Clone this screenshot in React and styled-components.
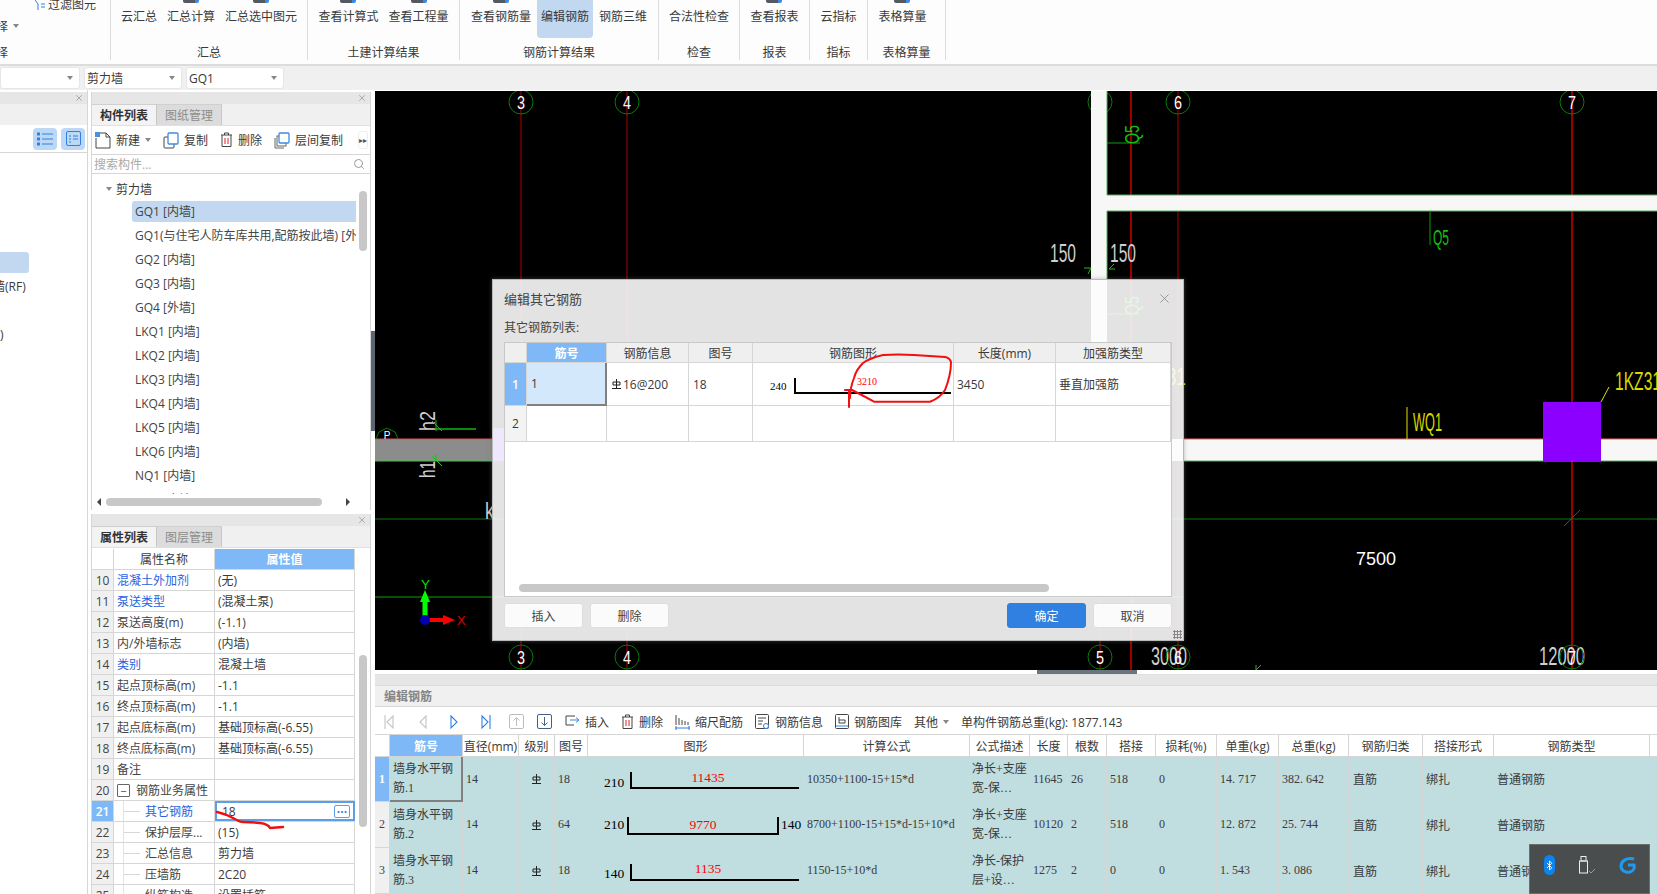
import React from 'react';
import styled, { createGlobalStyle } from 'styled-components';
import { X, Search, Bluetooth } from 'lucide-react';

const sans = '"Open Sans", "Noto Sans CJK SC", sans-serif';
const serif = '"Liberation Serif", "Noto Sans CJK SC", serif';
const line = '#d6d6d6';
const blue = '#7eb8f7';

const Global = createGlobalStyle`
    * { box-sizing: border-box; }
    html, body { margin: 0; padding: 0; background: white; }
`;

const Page = styled.div`
    position: relative;
    width: 1657px;
    height: 894px;
    overflow: hidden;
    font-family: ${sans};
    font-size: 12px;
    color: #3a3a3a;
    background: white;
`;

/* ribbon */
const Ribbon = styled.div`
    display: flex;
    height: 66px;
    background: #fdfdfd;
    border-bottom: 2px solid #dcdcdc;
`;

const Group = styled.div`
    width: ${p => p.$w}px;
    height: 60px;
    flex: none;
    border-right: 1px solid #dcdcdc;
`;

const ItemRow = styled.div`
    display: flex;
    justify-content: center;
    gap: 10px;
    height: 45px;
    padding-right: ${p => p.$shift || 0}px;
`;

const Item = styled.div`
    display: flex;
    flex-direction: column;
    align-items: center;
    height: 38px;
    line-height: 18px;
    white-space: nowrap;
    ${p => p.$on && `
        margin: 0 -4px;
        padding: 0 4px;
        background: #c1d8f0;
        border-radius: 0 0 4px 4px;
    `}
`;

const Stub = styled.span`
    display: block;
    width: ${p => (p.$show ? 16 : 0)}px;
    height: 3px;
    margin-bottom: 5px;
    background: #55585e;
    border-radius: 0 0 2px 2px;
    border-right: ${p => (p.$show ? '4px solid #3d8be0' : 'none')};
`;

const GroupLabel = styled.div`
    text-align: center;
    line-height: 15px;
`;

const ClipGroup = styled(Group)`
    overflow: hidden;
    position: relative;
`;

const FilterRow = styled.div`
    display: flex;
    align-items: center;
    gap: 3px;
    height: 10px;
    padding-left: 35px;
    line-height: 10px;
`;

const PickRow = styled.div`
    display: flex;
    align-items: center;
    gap: 5px;
    height: 35px;
    margin-left: -4px;
    padding-bottom: 3px;
`;

const ClipLabel = styled(GroupLabel)`
    text-align: left;
    margin-left: -4px;
`;

const Caret = styled.i`
    display: block;
    width: 0;
    height: 0;
    flex: none;
    border-left: 3px solid transparent;
    border-right: 3px solid transparent;
    border-top: 4px solid #888;
`;

/* selects */
const SelectBar = styled.div`
    display: flex;
    gap: 4px;
    height: 24px;
    padding-top: 1px;
    background: #f0f0f0;
`;

const Select = styled.div`
    display: flex;
    align-items: center;
    justify-content: space-between;
    width: ${p => p.$w}px;
    height: 22px;
    padding: 0 6px 0 2px;
    background: white;
    border: 1px solid #e6e6e6;
    border-radius: 3px;
`;

/* workspace */
const Workspace = styled.div`
    display: flex;
    height: 804px;
`;

const NavColumn = styled.div`
    width: 88px;
    flex: none;
    padding-top: 2px;
    border-right: 1px solid ${line};
`;

const PaneHead = styled.div`
    display: flex;
    align-items: center;
    justify-content: flex-end;
    height: 12px;
    padding-right: 3px;
    background: #e6e6e6;
    color: #a0a0a0;
`;

const NavTabs = styled.div`
    height: 21px;
    background: #f0f0f0;
`;

const NavTools = styled.div`
    display: flex;
    justify-content: flex-end;
    align-items: center;
    gap: 4px;
    height: 28px;
    padding-right: 2px;
    border-bottom: 1px solid ${line};
`;

const ViewBtn = styled.div`
    display: flex;
    align-items: center;
    justify-content: center;
    width: 24px;
    height: 22px;
    background: #bcd8f5;
    border-radius: 4px;
`;

const NavList = styled.div`
    padding-top: 99px;
`;

const NavRow = styled.div`
    height: 24px;
    line-height: 21px;
    white-space: nowrap;
    overflow: hidden;
    text-indent: ${p => p.$indent || 0}px;
    ${p => p.$on && `
        width: 29px;
        height: 21px;
        margin-bottom: 3px;
        background: #c1d8f0;
        border-radius: 0 3px 3px 0;
    `}
`;

const PaneColumn = styled.div`
    width: 287px;
    flex: none;
    padding: 2px 4px 0 3px;
    position: relative;
`;

const Pane = styled.div`
    height: ${p => p.$h}px;
    margin-bottom: 4px;
    border-left: 1px solid ${line};
    border-right: 1px solid ${line};
    overflow: hidden;
    position: relative;
`;

const Tabs = styled.div`
    display: flex;
    height: 22px;
    background: #f0f0f0;
    border-bottom: 1px solid #e0e0e0;
`;

const Tab = styled.div`
    width: 65px;
    line-height: 21px;
    text-align: center;
    font-weight: ${p => (p.$on ? 600 : 400)};
    color: ${p => (p.$on ? '#333' : '#8c8c8c')};
    background: ${p => (p.$on ? '#f3f3f3' : '#dcdcdc')};
    border-right: 1px solid #c8c8c8;
    border-top: 1px solid #d0d0d0;
`;

const ToolBar = styled.div`
    display: flex;
    align-items: center;
    gap: 12px;
    height: 29px;
    padding-left: 3px;
    border-bottom: 1px solid ${line};
    white-space: nowrap;
`;

const Tool = styled.div`
    display: flex;
    align-items: center;
    gap: 5px;
    flex: none;
`;

const MoreBtn = styled.div`
    width: 10px;
    height: 18px;
    margin-left: auto;
    margin-right: 2px;
    line-height: 16px;
    font-size: 8px;
    text-align: center;
    color: #555;
    border: 1px solid #eee;
    border-radius: 3px;
`;

const SearchRow = styled.div`
    display: flex;
    align-items: center;
    justify-content: space-between;
    height: 19px;
    padding: 0 5px 0 2px;
    color: #aaa;
    border-bottom: 1px solid ${line};
`;

const Tree = styled.div`
    height: 320px;
    padding-top: 2px;
    overflow: hidden;
    position: relative;
`;

const TreeRoot = styled.div`
    display: flex;
    align-items: center;
    gap: 4px;
    height: 25px;
    padding-left: 14px;
`;

const TreeRow = styled.div`
    width: 224px;
    height: 21px;
    margin: 0 0 3px 40px;
    padding-left: 3px;
    line-height: 22px;
    white-space: nowrap;
    overflow: hidden;
    color: #444;
    background: ${p => (p.$on ? '#c1d8f0' : 'transparent')};
    border-radius: 3px 0 0 3px;
`;

const VThumb = styled.div`
    position: absolute;
    top: ${p => p.$top}px;
    right: 3px;
    width: 8px;
    height: ${p => p.$h}px;
    background: #c8c8c8;
    border-radius: 4px;
`;

const HScroll = styled.div`
    display: flex;
    align-items: center;
    justify-content: space-between;
    height: 16px;
    padding: 0 20px 0 5px;
`;

const HArrow = styled.i`
    display: block;
    width: 0;
    height: 0;
    border-top: 4px solid transparent;
    border-bottom: 4px solid transparent;
    border-${p => (p.$dir === 'left' ? 'right' : 'left')}: 4px solid #444;
`;

const HThumb = styled.div`
    width: 216px;
    height: 8px;
    margin: 0 auto 0 5px;
    background: #c8c8c8;
    border-radius: 4px;
`;

/* shared grid */
const GridRow = styled.div`
    display: grid;
    grid-template-columns: ${p => p.$cols};
    height: ${p => p.$h}px;
    background: ${p => p.$bg || 'white'};
    border-bottom: 1px solid ${line};
    flex: none;
`;

const Cell = styled.div`
    display: flex;
    align-items: center;
    justify-content: ${p => (p.$center ? 'center' : 'flex-start')};
    min-width: 0;
    padding: 0 ${p => (p.$center ? 0 : p.$pad ?? 4)}px;
    border-right: 1px solid ${line};
    background: ${p => p.$bg || 'transparent'};
    color: ${p => p.$color || 'inherit'};
    font-weight: ${p => (p.$bold ? 600 : 400)};
    white-space: nowrap;
    overflow: hidden;
    position: relative;
`;

const SelectedCell = styled(Cell)`
    border-right: 2px solid #808080;
    border-bottom: 2px solid #808080;
    margin-bottom: -1px;
    white-space: normal;
    line-height: 19px;
`;

/* property table */
const PropTable = styled.div`
    width: 263px;
    margin-top: 1px;
`;

const Branch = styled.span`
    display: block;
    position: absolute;
    left: 9px;
    top: 0;
    bottom: 0;
    width: 17px;
    border-left: 1px solid #e4e4e4;
    &::after {
        content: '';
        position: absolute;
        left: 0;
        right: 0;
        top: 10px;
        border-top: 1px solid #d8d8d8;
    }
`;

const FoldBox = styled.span`
    display: flex;
    align-items: center;
    justify-content: center;
    width: 13px;
    height: 13px;
    margin-right: 6px;
    border: 1px solid #666;
    border-radius: 1px;
    font-size: 11px;
    line-height: 1;
`;

const ActiveValue = styled(Cell)`
    justify-content: space-between;
    border: 2px solid #5b9fe8;
    padding: 0 3px 0 5px;
`;

const DotsBtn = styled.span`
    width: 16px;
    height: 13px;
    line-height: 6px;
    text-align: center;
    color: #3d7fd0;
    font-weight: 700;
    border: 1px solid #5b9fe8;
    border-radius: 2px;
`;

/* right side */
const RightColumn = styled.div`
    flex: 1;
    min-width: 0;
    padding-top: 1px;
    position: relative;
`;

const Canvas = styled.div`
    position: relative;
    height: 579px;
    background: black;
`;

const CadSvg = styled.svg`
    display: block;
    font-family: "Liberation Sans", sans-serif;
`;

const PaneGrip = styled.div`
    position: absolute;
    left: -4px;
    top: 241px;
    width: 4px;
    height: 100px;
    background: #5d6670;
`;

const BottomGrip = styled.div`
    height: 4px;
    background: white;
    display: flex;
    padding-left: 662px;
    &::before {
        content: '';
        width: 100px;
        background: #6c757d;
    }
`;

const EditHead = styled.div`
    height: 33px;
    border-top: 1px solid #e0e0e0;
    background: linear-gradient(#e6e6e6 0 10px, #dcdcdc 10px 11px, #f0f0f0 11px);
    display: flex;
    align-items: flex-end;
    padding: 0 0 1px 9px;
    color: #858585;
    border-bottom: 1px solid ${line};
    font-weight: 600;
`;

const EditTools = styled(ToolBar)`
    height: 28px;
    padding: 2px 0 0 9px;
    background: white;
`;

const Slot = styled.div`
    display: flex;
    align-items: center;
    width: ${p => p.$w}px;
    margin-right: -12px;
    flex: none;
`;

const BarTable = styled.div`
    font-family: ${serif};
    background: white;
`;

const HeadRow = styled(GridRow)`
    font-family: ${sans};
    height: 22px;
`;

const Wrapped = styled.div`
    white-space: normal;
    line-height: 19px;
`;

const EllipsisCell = styled(Cell)`
    font-family: ${serif};
`;

const SvgCell = styled.svg`
    display: block;
    font-family: "Liberation Serif", serif;
`;

const Tray = styled.div`
    position: absolute;
    right: 7px;
    bottom: 0;
    display: flex;
    align-items: center;
    justify-content: space-between;
    width: 121px;
    height: 50px;
    padding: 0 12px 8px 14px;
    background: #4a4d4d;
    border: 1px solid #6b6e6e;
`;

const BtPill = styled.div`
    display: flex;
    align-items: center;
    justify-content: center;
    width: 11px;
    height: 20px;
    background: #0a84f0;
    border-radius: 6px;
    color: white;
`;

/* dialog */
const Dialog = styled.div`
    position: absolute;
    left: 117px;
    top: 188px;
    width: 692px;
    height: 362px;
    padding: 0 11px;
    background: rgba(252, 252, 252, 0.9);
    border: 1px solid #b9b9b9;
    box-shadow: 0 0 4px rgba(120, 120, 120, 0.5);
`;

const DialogTitle = styled.div`
    display: flex;
    align-items: center;
    justify-content: space-between;
    height: 37px;
    font-size: 13px;
    color: #444;
`;

const DialogLabel = styled.div`
    height: 18px;
    line-height: 18px;
    margin: 2px 0 5px;
    color: #444;
`;

const DialogTable = styled.div`
    display: flex;
    flex-direction: column;
    height: 255px;
    background: white;
    border: 1px solid #c8c8c8;
`;

const Filler = styled.div`
    flex: 1;
    display: flex;
    align-items: flex-end;
    padding: 0 122px 4px 14px;
`;

const ScrollThumb = styled.div`
    width: 100%;
    height: 8px;
    background: #c8c8c8;
    border-radius: 4px;
`;

const DialogFoot = styled.div`
    display: flex;
    gap: 7px;
    margin-top: 6px;
`;

const Button = styled.button`
    width: 79px;
    height: 25px;
    margin-left: ${p => (p.$push ? 'auto' : 0)};
    padding: 0;
    font: inherit;
    color: ${p => (p.$primary ? 'white' : '#444')};
    background: ${p => (p.$primary ? '#2f80e0' : '#fbfbfb')};
    border: 1px solid ${p => (p.$primary ? '#2f80e0' : '#dedede')};
    border-radius: 3px;
`;

const ResizeGrip = styled.div`
    position: absolute;
    right: 1px;
    bottom: 1px;
    width: 9px;
    height: 9px;
    background: radial-gradient(circle, #888 1px, transparent 1.2px) 0 0 / 3px 3px;
`;

const RebarInfo = styled.span`
    display: flex;
    align-items: center;
    gap: 2px;
    margin-left: 1px;
`;

const Ink = styled.svg`
    position: absolute;
    left: 0;
    top: 0;
    pointer-events: none;
`;

/* icons */
const Page16 = () => (
    <svg width="16" height="18" viewBox="0 0 16 18" fill="none">
        <path d="M4 2h7l4 4v11H1V7" stroke="#444" />
        <path d="M11 2v4h4" stroke="#444" />
        <rect x="0" y="1" width="5" height="5" fill="#4a90e2" />
    </svg>
);
const CopyIcon = () => (
    <svg width="16" height="17" viewBox="0 0 16 17" fill="none">
        <rect x="1" y="5" width="10" height="11" rx="1" stroke="#444" />
        <rect x="5" y="1" width="10" height="11" rx="1" fill="#fff" stroke="#3d8be0" strokeWidth="1.3" />
    </svg>
);
const StackIcon = () => (
    <svg width="16" height="17" viewBox="0 0 16 17" fill="none">
        <path d="M1 6v10h9" stroke="#666" />
        <rect x="3" y="4" width="9" height="10" fill="#fff" stroke="#666" />
        <rect x="5" y="1" width="10" height="10" rx="1" fill="#fff" stroke="#3d8be0" strokeWidth="1.3" />
    </svg>
);
const TrashIcon = () => (
    <svg width="13" height="16" viewBox="0 0 13 16" fill="none">
        <path d="M1 3h11M4.5 3V1h4v2M2 3v11.5h9V3" stroke="#444" />
        <path d="M5 6v6M8 6v6" stroke="#e02020" />
    </svg>
);
const ListIcon = () => (
    <svg width="16" height="14" viewBox="0 0 16 14" fill="none" stroke="#2f80e0">
        <rect x="0.5" y="1" width="2" height="2" />
        <rect x="0.5" y="6" width="2" height="2" />
        <rect x="0.5" y="11" width="2" height="2" />
        <path d="M5 2h11M5 7h11M5 12h11" />
    </svg>
);
const FormIcon = () => (
    <svg width="15" height="15" viewBox="0 0 15 15" fill="none" stroke="#2f80e0">
        <rect x="0.5" y="0.5" width="14" height="14" rx="1.5" />
        <path d="M3 5h2M7 5h5M3 8h2M7 8h5M3 11h2" />
    </svg>
);
const FunnelIcon = () => (
    <svg width="10" height="10" viewBox="0 0 10 10" fill="none" stroke="#2f80e0">
        <path d="M0 0l3 4v6M6 4h4M6 7h4" />
    </svg>
);
const Nav = ({ dir, stop, color }) => (
    <svg width="11" height="16" viewBox="0 0 11 16" fill="none" stroke={color} strokeWidth="1.1">
        {dir === 'left'
            ? <path d={`M9 2L3 8l6 6z${stop ? 'M1 1v14' : ''}`} />
            : <path d={`M2 2l6 6-6 6z${stop ? 'M10 1v14' : ''}`} />}
    </svg>
);
const BoxArrow = ({ down, color }) => (
    <svg width="15" height="15" viewBox="0 0 15 15" fill="none" stroke={color}>
        <rect x="0.5" y="0.5" width="14" height="14" rx="1.5" />
        <path d={down ? 'M7.5 3v8M4.5 8.5l3 3 3-3' : 'M7.5 12V4M4.5 6.5l3-3 3 3'} />
    </svg>
);
const InsertIcon = () => (
    <svg width="15" height="13" viewBox="0 0 15 13" fill="none">
        <path d="M10 1H1v9h8" stroke="#444" />
        <path d="M5 5h9M11 2.500l3 2.500-3 2.500" stroke="#3d8be0" />
    </svg>
);
const ScaleIcon = () => (
    <svg width="15" height="16" viewBox="0 0 15 16" fill="none">
        <path d="M1 1v10M4 4v7M7 6v5M10 7v4M13 8v3" stroke="#444" />
        <path d="M0 14h15M1 12v4M14 12v4" stroke="#2f80e0" />
    </svg>
);
const InfoIcon = () => (
    <svg width="15" height="16" viewBox="0 0 15 16" fill="none">
        <rect x="0.500" y="0.500" width="13" height="14" rx="1" stroke="#444" />
        <path d="M3 4h8M3 7h5M3 10h4" stroke="#444" />
        <circle cx="11" cy="12" r="2.500" fill="#fff" stroke="#2f80e0" />
    </svg>
);
const LibIcon = () => (
    <svg width="14" height="15" viewBox="0 0 14 15" fill="none">
        <rect x="0.500" y="0.500" width="13" height="14" rx="1" stroke="#444" />
        <path d="M4 3v6h6V6H4" stroke="#444" />
        <path d="M1 12h12" stroke="#2f80e0" />
    </svg>
);
const RebarMark = () => (
    <svg width="9" height="10" viewBox="0 0 9 10" fill="none" stroke="#222">
        <path d="M4.500 0v9M0 9.500h9" />
        <path d="M1 3h7v3H1z" />
    </svg>
);
const UsbIcon = () => (
    <svg width="18" height="18" viewBox="0 0 18 18" fill="none" stroke="#eee">
        <rect x="1.500" y="5" width="8" height="12" />
        <rect x="3" y="0.500" width="5" height="4.500" />
        <path d="M11 15l2 2 4-4" stroke="#999" />
    </svg>
);
const SwirlIcon = () => (
    <svg width="18" height="18" viewBox="0 0 18 18" fill="none" stroke="#1e9bf0" strokeWidth="3">
        <path d="M15 3C8 1 2 5 2 10c0 5 5 7 9 6 3-1 5-4 4-7H9" />
    </svg>
);

/* bar shape drawings */
const BarShape = ({ w, h, left, mid, right, hookX, lineY, topY, endX, midX, midY, leftX, leftY, rightX, rightHook, size = 13.5, midSize = 13.5 }) => (
    <SvgCell width={w} height={h}>
        <path
            d={`M${hookX} ${topY}V${lineY}H${endX}${rightHook ? `V${topY}` : ''}`}
            fill="none"
            stroke="#000"
            strokeWidth="2"
        />
        <text x={leftX} y={leftY} fontSize={size} fill="#000">{left}</text>
        <text x={midX} y={midY} fontSize={midSize} fill="#f00" textAnchor="middle">{mid}</text>
        {right && <text x={rightX} y={leftY} fontSize={size} fill="#000">{right}</text>}
    </SvgCell>
);

/* cad */
const Bubble = ({ x, y, n }) => (
    <g>
        <circle cx={x} cy={y} r="12" fill="none" stroke="#0a7a0a" />
        <text x={x} y={y + 7} fontSize="19" fill="#fff" textAnchor="middle" textLength="8" lengthAdjust="spacingAndGlyphs">{n}</text>
    </g>
);

const Narrow = ({ x, y, w, size = 26, fill = '#cfcfcf', children, rotate }) => (
    <text
        x={rotate ? 0 : x}
        y={rotate ? 0 : y}
        transform={rotate ? `translate(${x},${y}) rotate(-90)` : undefined}
        fontSize={size}
        fill={fill}
        textLength={w}
        lengthAdjust="spacingAndGlyphs"
    >{children}</text>
);

const CadDrawing = () => (
    <CadSvg width="1282" height="579" viewBox="375 91 1282 579">
        <path d="M521 91V670M627 91V670M1100 91V670" stroke="#b00000" />
        <path d="M1131 91V670M1572 91V670" stroke="#9a0000" strokeWidth="2" />
        <path d="M1178 91V670" stroke="#b00000" />
        <path d="M375 519H1657" stroke="#0a7a0a" />
        <path d="M375 597H1184" stroke="#0a6a0a" strokeWidth="1.5" />
        <circle cx="1100" cy="102" r="12" fill="none" stroke="#0a7a0a" />

        <rect x="1091" y="91" width="16" height="355" fill="#f7f7f7" />
        <path d="M1107 91V195M1107 211V280" stroke="#5fae5f" />
        <rect x="1107" y="195" width="550" height="16" fill="#f7f7f7" />
        <path d="M1107 195H1657M1107 211H1657" stroke="#5fae5f" />
        <rect x="1184" y="439" width="473" height="22" fill="#f7f7f7" />
        <path d="M1184 439H1657" stroke="#f06060" />
        <path d="M1184 461H1657" stroke="#5fae5f" />
        <rect x="375" y="439" width="118" height="22" fill="#8c8c8c" />
        <path d="M375 439H493" stroke="#e05050" />
        <path d="M375 461H493" stroke="#40c040" />
        <rect x="493" y="428" width="27" height="33" fill="#7828f0" />
        <rect x="1110" y="439" width="74" height="22" fill="#fff" />

        <rect x="1543" y="402" width="58" height="59" fill="#8c00ff" />
        <path d="M1601 402L1609 387" stroke="#e0e000" />
        <Narrow x="1615" y="390" w="46" fill="#d8d800">1KZ31</Narrow>
        <Narrow x="1135" y="385" w="51" size="24" fill="#d8d800">1KZ31</Narrow>
        <path d="M1407 407V439" stroke="#e0e000" />
        <Narrow x="1413" y="431" w="29" fill="#d8d800">WQ1</Narrow>

        <path d="M1107 143H1140M1430 211V245" stroke="#0aa00a" />
        <Narrow x="1139" y="144" w="19" size="21" fill="#12c012" rotate>Q5</Narrow>
        <path d="M1107 314H1140" stroke="#0aa00a" />
        <Narrow x="1139" y="315" w="19" size="21" fill="#12c012" rotate>Q5</Narrow>
        <Narrow x="1433" y="245" w="16" size="22" fill="#12c012">Q5</Narrow>

        <Narrow x="1050" y="262" w="26">150</Narrow>
        <Narrow x="1110" y="262" w="26">150</Narrow>
        <path d="M1084 268h7l-3 6M1109 269h6M1109 269l5-5" stroke="#18c018" fill="none" />
        <text x="1356" y="565" fontSize="18" fill="#fff">7500</text>
        <Narrow x="1151" y="665" w="36">3000</Narrow>
        <Narrow x="1539" y="665" w="46">12000</Narrow>
        <path d="M1256 670v-5M1256 670l5-5" stroke="#18c018" />
        <path d="M1564 526l16-16" stroke="#0a7a0a" />

        <Narrow x="435" y="431" w="20" size="22" rotate>h2</Narrow>
        <Narrow x="435" y="478" w="17" size="22" rotate>h1</Narrow>
        <path d="M435 429H476" stroke="#0a8a0a" strokeWidth="2" />
        <path d="M432 421l10 10M432 456l10 10" stroke="#18c018" />
        <path d="M436 420v11M436 461v-6" stroke="#18c018" />
        <Narrow x="485" y="519" w="9" size="24">k</Narrow>
        <path d="M376 439l3-7 8-4 8 4 3 7" fill="none" stroke="#0a7a0a" />
        <text x="387" y="439" fontSize="10" fill="#fff" textAnchor="middle">P</text>

        <path d="M425 620V598" stroke="#00ff00" strokeWidth="5" />
        <path d="M420 602l5-12 5 12z" fill="#00ff00" />
        <Narrow x="421" y="589" w="9" size="12" fill="#00e000">Y</Narrow>
        <path d="M425 620H444" stroke="#ff0000" strokeWidth="4" />
        <path d="M443 615l12 5-12 5z" fill="#ff0000" />
        <circle cx="425" cy="620" r="5" fill="#0000b0" />
        <text x="457" y="625" fontSize="13" fill="#e00000">X</text>

        {[[521, '3'], [627, '4'], [1178, '6'], [1572, '7']].map(([x, n]) => <Bubble key={n} x={x} y={102} n={n} />)}
        {[[521, '3'], [627, '4'], [1100, '5'], [1178, '6'], [1572, '7']].map(([x, n]) => <Bubble key={n} x={x} y={657} n={n} />)}
    </CadSvg>
);

/* data */
const groups = [
    { w: 197, label: '汇总', items: [['云汇总'], ['汇总计算', 1], ['汇总选中图元', 1]] },
    { w: 152, label: '土建计算结果', items: [['查看计算式', 1], ['查看工程量', 1]] },
    { w: 199, label: '钢筋计算结果', items: [['查看钢筋量', 1], ['编辑钢筋', 0, 1], ['钢筋三维']] },
    { w: 81, label: '检查', items: [['合法性检查']] },
    { w: 70, label: '报表', items: [['查看报表', 1]] },
    { w: 58, label: '指标', items: [['云指标']] },
    { w: 78, label: '表格算量', shift: 8, items: [['表格算量', 1]] },
];

const treeItems = [
    'GQ1 [内墙]', 'GQ1(与住宅人防车库共用,配筋按此墙) [外墙]', 'GQ2 [内墙]', 'GQ3 [内墙]', 'GQ4 [外墙]',
    'LKQ1 [内墙]', 'LKQ2 [内墙]', 'LKQ3 [内墙]', 'LKQ4 [内墙]', 'LKQ5 [内墙]', 'LKQ6 [内墙]', 'NQ1 [内墙]', 'NQ2 [内墙]',
];

const propCols = '22px 101px 140px';
const props = [
    [10, '混凝土外加剂', '(无)', 'link'],
    [11, '泵送类型', '(混凝土泵)', 'link'],
    [12, '泵送高度(m)', '(-1.1)'],
    [13, '内/外墙标志', '(内墙)'],
    [14, '类别', '混凝土墙', 'link'],
    [15, '起点顶标高(m)', '-1.1'],
    [16, '终点顶标高(m)', '-1.1'],
    [17, '起点底标高(m)', '基础顶标高(-6.55)'],
    [18, '终点底标高(m)', '基础顶标高(-6.55)'],
    [19, '备注', ''],
    [20, '钢筋业务属性', '', 'fold'],
    [21, '其它钢筋', '18', 'active'],
    [22, '保护层厚...', '(15)', 'child'],
    [23, '汇总信息', '剪力墙', 'child'],
    [24, '压墙筋', '2C20', 'child'],
    [25, '纵筋构造', '设置插筋', 'child'],
];

const dlgCols = '22px 80px 82px 64px 201px 102px 1fr';
const barCols = '15px 73px 56px 36px 33px 216px 166px 60px 38px 39px 49px 61px 62px 70px 74px 71px 156px';
const barHead = ['', '筋号', '直径(mm)', '级别', '图号', '图形', '计算公式', '公式描述', '长度', '根数', '搭接', '损耗(%)', '单重(kg)', '总重(kg)', '钢筋归类', '搭接形式', '钢筋类型'];
const teal = '#c0dde0';
const barRows = [
    {
        h: 45, no: '18', name: '墙身水平钢筋.1', formula: '10350+1100-15+15*d', desc: '净长+支座宽-保…',
        len: '11645', count: '26', lap: '518', unit: '14. 717', total: '382. 642',
        shape: { left: '210', mid: '11435', hookX: 43, topY: 15, lineY: 31, endX: 211, midX: 120, midY: 25, leftX: 16, leftY: 30 },
    },
    {
        h: 46, no: '64', name: '墙身水平钢筋.2', formula: '8700+1100-15+15*d-15+10*d', desc: '净长+支座宽-保…',
        len: '10120', count: '2', lap: '518', unit: '12. 872', total: '25. 744',
        shape: { left: '210', mid: '9770', right: '140', hookX: 40, topY: 15, lineY: 32, endX: 190, rightHook: true, midX: 115, midY: 27, leftX: 16, leftY: 27, rightX: 193 },
    },
    {
        h: 46, no: '18', name: '墙身水平钢筋.3', formula: '1150-15+10*d', desc: '净长-保护层+设…',
        len: '1275', count: '2', lap: '0', unit: '1. 543', total: '3. 086',
        shape: { left: '140', mid: '1135', hookX: 43, topY: 16, lineY: 32, endX: 211, midX: 120, midY: 25, leftX: 16, leftY: 30 },
    },
];

const PropRow = ({ n, name, value, kind }) => {
    const active = kind === 'active';
    const child = active || kind === 'child';
    return (
        <GridRow $cols={propCols} $h={21}>
            <Cell $center $bg={active ? blue : '#f0f0f0'} $color={active ? 'white' : '#444'} $bold={active}>{n}</Cell>
            <Cell $pad={child ? 31 : 3} $color={kind === 'link' || active ? '#2a62e0' : '#444'}>
                {child && <Branch />}
                {kind === 'fold' && <FoldBox>−</FoldBox>}
                {name}
            </Cell>
            {active ? (
                <ActiveValue>{value}<DotsBtn>...</DotsBtn></ActiveValue>
            ) : (
                <Cell $pad={3}>{value}</Cell>
            )}
        </GridRow>
    );
};

const App = () => {
    return (
        <Page>
            <Global />
            <Ribbon>
                <ClipGroup $w={111}>
                    <FilterRow><FunnelIcon />过滤图元</FilterRow>
                    <PickRow>择<Caret /></PickRow>
                    <ClipLabel>择</ClipLabel>
                </ClipGroup>
                {groups.map(g => (
                    <Group key={g.label} $w={g.w}>
                        <ItemRow $shift={g.shift}>
                            {g.items.map(([text, stub, on]) => (
                                <Item key={text} $on={on}><Stub $show={stub} />{text}</Item>
                            ))}
                        </ItemRow>
                        <GroupLabel>{g.label}</GroupLabel>
                    </Group>
                ))}
            </Ribbon>

            <SelectBar>
                <Select $w={80}><span /><Caret /></Select>
                <Select $w={98}>剪力墙<Caret /></Select>
                <Select $w={98}>GQ1<Caret /></Select>
            </SelectBar>

            <Workspace>
                <NavColumn>
                    <PaneHead><X size={10} /></PaneHead>
                    <NavTabs />
                    <NavTools>
                        <ViewBtn><ListIcon /></ViewBtn>
                        <ViewBtn><FormIcon /></ViewBtn>
                    </NavTools>
                    <NavList>
                        <NavRow $on />
                        <NavRow $indent={-7}>墙(RF)</NavRow>
                        <NavRow />
                        <NavRow>)</NavRow>
                    </NavList>
                </NavColumn>

                <PaneColumn>
                    <Pane $h={418}>
                        <PaneHead><X size={10} /></PaneHead>
                        <Tabs>
                            <Tab $on>构件列表</Tab>
                            <Tab>图纸管理</Tab>
                        </Tabs>
                        <ToolBar>
                            <Tool><Page16 />新建<Caret /></Tool>
                            <Tool><CopyIcon />复制</Tool>
                            <Tool><TrashIcon />删除</Tool>
                            <Tool><StackIcon />层间复制</Tool>
                            <MoreBtn>▸▸</MoreBtn>
                        </ToolBar>
                        <SearchRow>搜索构件...<Search size={12} color="#999" /></SearchRow>
                        <Tree>
                            <TreeRoot><Caret />剪力墙</TreeRoot>
                            {treeItems.map((t, i) => <TreeRow key={t} $on={i === 0}>{t}</TreeRow>)}
                            <VThumb $top={17} $h={60} />
                        </Tree>
                        <HScroll>
                            <HArrow $dir="left" />
                            <HThumb />
                            <HArrow $dir="right" />
                        </HScroll>
                    </Pane>
                    <Pane $h={380}>
                        <PaneHead><X size={10} /></PaneHead>
                        <Tabs>
                            <Tab $on>属性列表</Tab>
                            <Tab>图层管理</Tab>
                        </Tabs>
                        <PropTable>
                            <GridRow $cols={propCols} $h={21}>
                                <Cell />
                                <Cell $center>属性名称</Cell>
                                <Cell $center $bg={blue} $color="white" $bold>属性值</Cell>
                            </GridRow>
                            {props.map(([n, name, value, kind]) => (
                                <PropRow key={n} n={n} name={name} value={value} kind={kind} />
                            ))}
                        </PropTable>
                        <VThumb $top={141} $h={172} />
                    </Pane>
                </PaneColumn>

                <RightColumn>
                    <PaneGrip />
                    <Canvas>
                        <CadDrawing />
                        <Dialog>
                            <DialogTitle>编辑其它钢筋<X size={15} color="#888" strokeWidth={1.3} /></DialogTitle>
                            <DialogLabel>其它钢筋列表:</DialogLabel>
                            <DialogTable>
                                <GridRow $cols={dlgCols} $h={20} $bg="#efefef">
                                    <Cell />
                                    <Cell $center $bg={blue} $color="white" $bold>筋号</Cell>
                                    <Cell $center>钢筋信息</Cell>
                                    <Cell $center>图号</Cell>
                                    <Cell $center>钢筋图形</Cell>
                                    <Cell $center>长度(mm)</Cell>
                                    <Cell $center>加强筋类型</Cell>
                                </GridRow>
                                <GridRow $cols={dlgCols} $h={43}>
                                    <Cell $center $bg={blue} $color="white" $bold>1</Cell>
                                    <SelectedCell $bg="#d4e8fc">1</SelectedCell>
                                    <Cell $pad={4}><RebarInfo><RebarMark />16@200</RebarInfo></Cell>
                                    <Cell $pad={4}>18</Cell>
                                    <Cell $pad={0}>
                                        <BarShape
                                            w={201} h={42} left="240" mid="3210" hookX={42} topY={15} lineY={30} endX={198}
                                            midX={114} midY={22} leftX={17} leftY={27} size={11} midSize={10}
                                        />
                                    </Cell>
                                    <Cell $pad={3}>3450</Cell>
                                    <Cell $pad={3}>垂直加强筋</Cell>
                                </GridRow>
                                <GridRow $cols={dlgCols} $h={36}>
                                    <Cell $center $bg="#f3f3f3">2</Cell>
                                    <Cell /><Cell /><Cell /><Cell /><Cell /><Cell />
                                </GridRow>
                                <Filler><ScrollThumb /></Filler>
                            </DialogTable>
                            <DialogFoot>
                                <Button>插入</Button>
                                <Button>删除</Button>
                                <Button $primary $push>确定</Button>
                                <Button>取消</Button>
                            </DialogFoot>
                            <ResizeGrip />
                        </Dialog>
                    </Canvas>
                    <BottomGrip />
                    <EditHead>编辑钢筋</EditHead>
                    <EditTools>
                        <Slot $w={33}><Nav dir="left" stop color="#c4c4c4" /></Slot>
                        <Slot $w={32}><Nav dir="left" color="#c4c4c4" /></Slot>
                        <Slot $w={31}><Nav dir="right" color="#2f80e0" /></Slot>
                        <Slot $w={29}><Nav dir="right" stop color="#2f80e0" /></Slot>
                        <Slot $w={28}><BoxArrow color="#bdbdbd" /></Slot>
                        <Slot $w={28}><BoxArrow down color="#44608a" /></Slot>
                        <Tool><InsertIcon />插入</Tool>
                        <Tool><TrashIcon />删除</Tool>
                        <Tool><ScaleIcon />缩尺配筋</Tool>
                        <Tool><InfoIcon />钢筋信息</Tool>
                        <Tool><LibIcon />钢筋图库</Tool>
                        <Tool>其他<Caret /></Tool>
                        <Tool>单构件钢筋总重(kg):  1877.143</Tool>
                    </EditTools>
                    <BarTable>
                        <HeadRow $cols={barCols} $h={22}>
                            {barHead.map((t, i) => (
                                <Cell key={i} $center $bg={i === 1 ? blue : undefined} $color={i === 1 ? 'white' : undefined} $bold={i === 1}>{t}</Cell>
                            ))}
                        </HeadRow>
                        {barRows.map((r, i) => (
                            <GridRow key={r.name} $cols={barCols} $h={r.h} $bg={teal}>
                                <Cell $center $bg={i === 0 ? blue : '#f0f0f0'} $color={i === 0 ? 'white' : '#444'} $bold={i === 0}>{i + 1}</Cell>
                                {i === 0
                                    ? <SelectedCell $pad={3}>{r.name}</SelectedCell>
                                    : <Cell $pad={3}><Wrapped>{r.name}</Wrapped></Cell>}
                                <Cell $pad={3}>14</Cell>
                                <Cell $center><RebarMark /></Cell>
                                <Cell $pad={3}>{r.no}</Cell>
                                <Cell $pad={0}><BarShape w={216} h={r.h - 1} {...r.shape} /></Cell>
                                <Cell $pad={3}>{r.formula}</Cell>
                                <EllipsisCell $pad={2}><Wrapped>{r.desc}</Wrapped></EllipsisCell>
                                <Cell $pad={3}>{r.len}</Cell>
                                <Cell $pad={3}>{r.count}</Cell>
                                <Cell $pad={3}>{r.lap}</Cell>
                                <Cell $pad={3}>0</Cell>
                                <Cell $pad={3}>{r.unit}</Cell>
                                <Cell $pad={3}>{r.total}</Cell>
                                <Cell $pad={4}>直筋</Cell>
                                <Cell $pad={3}>绑扎</Cell>
                                <Cell $pad={3}>普通钢筋</Cell>
                            </GridRow>
                        ))}
                    </BarTable>
                    <Tray>
                        <BtPill><Bluetooth size={13} /></BtPill>
                        <UsbIcon />
                        <SwirlIcon />
                    </Tray>
                </RightColumn>
            </Workspace>

            <Ink width="1657" height="894" viewBox="0 0 1657 894" fill="none" stroke="#f01010" strokeLinecap="round" strokeLinejoin="round">
                <path strokeWidth="2.500" d="M217 812Q226 814 233 818T243 822Q252 822 260 823T270 828L283 827" />
                <path strokeWidth="2" d="M849 407V390M845 390H852Q862 395 874 401.700H930Q940 398 945 390Q951 375 951 362Q950 358 945 357Q930 356 914 355Q898 354 883 355Q870 358 863 363Q856 370 854 378Q850 388 850 398" />
            </Ink>
        </Page>
    );
};

export default App;
